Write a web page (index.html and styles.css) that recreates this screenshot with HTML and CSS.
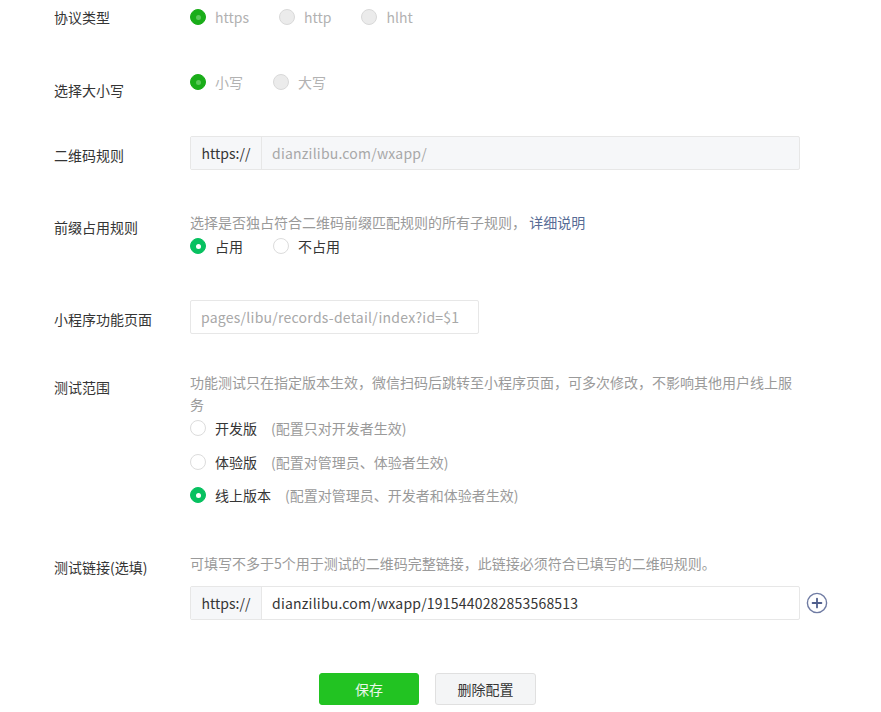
FILE: index.html
```html
<!DOCTYPE html>
<html lang="zh-CN">
<head>
  <meta charset="UTF-8" />
  <meta name="viewport" content="width=device-width, initial-scale=1.0"/>
  <title>配置二维码规则</title>
  <link rel="stylesheet" href="styles.css">
</head>
<body>
  <div class="form">

    <div class="row row-protocol">
      <div class="label">协议类型</div>
      <div class="field">
        <div class="radios">
          <label class="radio disabled checked"><span class="circle"></span>https</label>
          <label class="radio disabled"><span class="circle"></span>http</label>
          <label class="radio disabled"><span class="circle"></span>hlht</label>
        </div>
      </div>
    </div>

    <div class="row row-case">
      <div class="label">选择大小写</div>
      <div class="field">
        <div class="radios">
          <label class="radio disabled checked"><span class="circle"></span>小写</label>
          <label class="radio disabled"><span class="circle"></span>大写</label>
        </div>
      </div>
    </div>

    <div class="row row-rule">
      <div class="label">二维码规则</div>
      <div class="field">
        <div class="input-group readonly">
          <span class="addon">https://</span>
          <span class="value muted">dianzilibu.com/wxapp/</span>
        </div>
      </div>
    </div>

    <div class="row row-prefix">
      <div class="label">前缀占用规则</div>
      <div class="field">
        <p class="desc">选择是否独占符合二维码前缀匹配规则的所有子规则， <a href="#" class="link">详细说明</a></p>
        <div class="radios">
          <label class="radio checked"><span class="circle"></span>占用</label>
          <label class="radio"><span class="circle"></span>不占用</label>
        </div>
      </div>
    </div>

    <div class="row row-page">
      <div class="label">小程序功能页面</div>
      <div class="field">
        <input class="text-input" type="text" placeholder="pages/libu/records-detail/index?id=$1">
      </div>
    </div>

    <div class="row row-scope">
      <div class="label">测试范围</div>
      <div class="field">
        <p class="desc wrap">功能测试只在指定版本生效，微信扫码后跳转至小程序页面，可多次修改，不影响其他用户线上服务</p>
        <div class="radio-list">
          <label class="radio"><span class="circle"></span><span class="name">开发版</span><span class="hint">(配置只对开发者生效)</span></label>
          <label class="radio"><span class="circle"></span><span class="name">体验版</span><span class="hint">(配置对管理员、体验者生效)</span></label>
          <label class="radio checked"><span class="circle"></span><span class="name">线上版本</span><span class="hint">(配置对管理员、开发者和体验者生效)</span></label>
        </div>
      </div>
    </div>

    <div class="row row-links">
      <div class="label">测试链接(选填)</div>
      <div class="field">
        <p class="desc">可填写不多于5个用于测试的二维码完整链接，此链接必须符合已填写的二维码规则。</p>
        <div class="link-line">
          <div class="input-group">
            <span class="addon">https://</span>
            <span class="value">dianzilibu.com/wxapp/1915440282853568513</span>
          </div>
          <span class="add-btn">
            <svg width="22" height="22" viewBox="0 0 22 22">
              <circle cx="11" cy="11" r="9.6" fill="none" stroke="#6f7ba3" stroke-width="1.4"/>
              <path d="M11 6.6v8.8M6.6 11h8.8" stroke="#4f5e8c" stroke-width="1.8" stroke-linecap="round"/>
            </svg>
          </span>
        </div>
      </div>
    </div>

    <div class="actions">
      <button class="btn primary">保存</button>
      <button class="btn">删除配置</button>
    </div>

  </div>
</body>
</html>
```

FILE: styles.css
```css
body {
  margin: 0;
  background: #fff;
  color: #353535;
  font-family: "Noto Sans CJK SC", "Noto Sans", sans-serif;
  font-size: 14px;
}

.form {
  padding: 7px 0 0 54px;
}

.row {
  display: flex;
  align-items: flex-start;
}

.label {
  width: 136px;
  flex-shrink: 0;
  line-height: 20px;
  color: #353535;
}

.field {
  flex: 1;
}

/* row spacing */
.row-protocol { height: 65px; }
.row-case { height: 64px; }
.row-case .label { padding-top: 8px; }
.row-rule { height: 76px; }
.row-rule .label { padding-top: 9px; }
.row-prefix { height: 88px; }
.row-prefix .label { padding-top: 5px; }
.row-page { height: 71px; }
.row-page .label { padding-top: 9px; }
.row-scope { height: 182px; }
.row-scope .label { padding-top: 6px; }
.row-links { height: 120px; }
.row-links .label { padding-top: 4px; }

.desc {
  margin: 0;
  color: #9a9a9a;
  line-height: 20px;
}

.desc.wrap {
  width: 610px;
  line-height: 22px;
}

.link {
  color: #576b95;
  text-decoration: none;
}

.radios {
  display: flex;
  align-items: center;
  line-height: 20px;
  margin-top: 4px;
}

.row-protocol .radios,
.row-case .radios {
  margin-top: 0;
}

.radio {
  display: flex;
  align-items: center;
  margin-right: 30px;
  cursor: pointer;
}

.circle {
  width: 16px;
  height: 16px;
  box-sizing: border-box;
  border-radius: 50%;
  border: 1px solid #dcdcdc;
  background: #fff;
  margin-right: 9px;
  display: flex;
  align-items: center;
  justify-content: center;
}

.radio.checked .circle {
  background: #07c160;
  border-color: #07c160;
}

.radio.checked .circle::after {
  content: "";
  width: 5px;
  height: 5px;
  border-radius: 50%;
  background: #fff;
}

.radio.disabled {
  color: #b2b2b2;
}

.radio.disabled .circle {
  background: #ebebeb;
  border-color: #d9d9d9;
}

.radio.disabled.checked .circle {
  background: #1aad19;
  border-color: #1aad19;
}

.radio.disabled.checked .circle::after {
  background: #5bc85a;
}

.radio-list {
  margin-top: 3px;
}

.radio-list .radio {
  height: 20px;
  margin-bottom: 13.5px;
}

.radio-list .name {
  color: #353535;
}

.hint {
  color: #9a9a9a;
  margin-left: 14px;
}

.input-group {
  display: flex;
  width: 610px;
  height: 34px;
  box-sizing: border-box;
  border: 1px solid #e7e7e7;
  border-radius: 2px;
  align-items: stretch;
}

.input-group .addon {
  width: 70px;
  flex-shrink: 0;
  display: flex;
  align-items: center;
  justify-content: center;
  background: #f6f7f9;
  border-right: 1px solid #e7e7e7;
  color: #353535;
}

.input-group .value {
  flex: 1;
  display: flex;
  align-items: center;
  padding-left: 10px;
  color: #353535;
  letter-spacing: 0.2px;
}

.input-group .value.muted {
  color: #a8a8a8;
}

.input-group.readonly {
  background: #f6f7f9;
}

.text-input {
  width: 289px;
  height: 34px;
  box-sizing: border-box;
  border: 1px solid #e7e7e7;
  border-radius: 2px;
  padding: 0 10px;
  font: inherit;
  letter-spacing: 0.25px;
  color: #353535;
  outline: none;
}

.text-input::placeholder {
  color: #a8a8a8;
}

.link-line {
  display: flex;
  align-items: center;
  margin-top: 13px;
}

.add-btn {
  display: flex;
  margin-left: 6px;
}

.actions {
  display: flex;
  gap: 16px;
  padding-left: 265px;
}

.btn {
  width: 101px;
  height: 32px;
  border: 1px solid #e0e0e0;
  border-radius: 3px;
  background: #f4f5f6;
  color: #353535;
  font: inherit;
  font-size: 14px;
  cursor: pointer;
}

.btn.primary {
  width: 100px;
  background: #22c322;
  border-color: #22c322;
  color: #eaf8ea;
}
```
